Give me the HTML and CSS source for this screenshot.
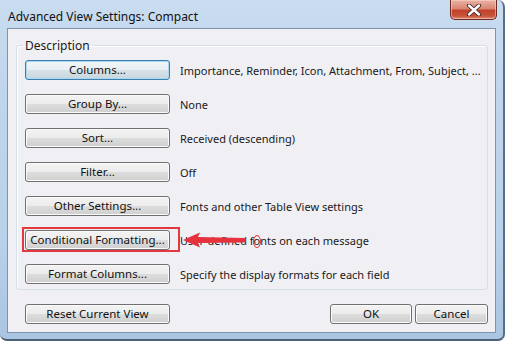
FILE: index.html
```html
<!DOCTYPE html>
<html>
<head>
<meta charset="utf-8">
<link rel="stylesheet" href="styles.css">
</head>
<body>
<div class="window">
  <div class="titlebar">
    <span class="title">Advanced View Settings: Compact</span>
    <div class="close">
      <svg width="16" height="12" viewBox="0 0 16 12"><path d="M3 1.5 L13 10.5 M13 1.5 L3 10.5" stroke="#4a2020" stroke-width="4.2" stroke-linecap="round"/><path d="M3 1.5 L13 10.5 M13 1.5 L3 10.5" stroke="#ffffff" stroke-width="2.4" stroke-linecap="round"/></svg>
    </div>
  </div>
  <div class="client">
    <fieldset class="group">
      <legend>Description</legend>
      <div class="row"><button class="btn default">Columns...</button><span class="desc">Importance, Reminder, Icon, Attachment, From, Subject, ...</span></div>
      <div class="row"><button class="btn">Group By...</button><span class="desc">None</span></div>
      <div class="row"><button class="btn">Sort...</button><span class="desc">Received (descending)</span></div>
      <div class="row"><button class="btn">Filter...</button><span class="desc">Off</span></div>
      <div class="row"><button class="btn">Other Settings...</button><span class="desc">Fonts and other Table View settings</span></div>
      <div class="row mark"><button class="btn">Conditional Formatting...</button><span class="desc">User-defined f<span class="circled">o</span>nts on each message</span>
        <span class="redbox"></span>
        <svg class="arrow" width="64" height="16" viewBox="0 0 64 16"><path d="M0 8 L17 0.5 L15 5 L62 6 L63 8 L62 10.5 L15 11 L17 15.5 Z" fill="#e5323c"/></svg>
      </div>
      <div class="row"><button class="btn">Format Columns...</button><span class="desc">Specify the display formats for each field</span></div>
    </fieldset>
    <div class="footer">
      <button class="btn">Reset Current View</button>
      <div class="spacer"></div>
      <button class="btn small">OK</button>
      <button class="btn cancel">Cancel</button>
    </div>
  </div>
</div>
</body>
</html>
```
FILE: styles.css
```css
html, body { margin: 0; padding: 0; }
body {
  width: 505px; height: 341px; overflow: hidden;
  font-family: "Noto Sans", "Open Sans", sans-serif;
  font-size: 11px; color: #1a1a1a;
}
.window {
  width: 505px; height: 341px; box-sizing: border-box;
  background: linear-gradient(180deg, #c9dcf0 0%, #bfd5ec 30%, #b9d1ea 70%, #a9c5e2 100%);
  border-right: 2px solid #5a6e88;
  border-bottom: 2px solid #4d6078;
  border-radius: 0 7px 7px 7px;
  display: flex; flex-direction: column;
  padding: 0 7px 6px 7px;
}
.titlebar {
  height: 31px; display: flex; align-items: flex-start; position: relative;
}
.title {
  margin-top: 8px; margin-left: 1px; font-size: 12px; color: #111;
}
.close {
  position: absolute; right: -1px; top: 0;
  width: 47px; height: 20px; box-sizing: border-box;
  border: 1px solid #6b2a22; border-top: none;
  border-radius: 0 0 5px 5px;
  background: linear-gradient(180deg, #eab3a4 0%, #d98672 45%, #c0412a 55%, #c8553a 85%, #e0927c 100%);
  box-shadow: inset 0 0 0 1px rgba(255,220,210,0.5);
  display: flex; align-items: center; justify-content: center;
}
.client {
  flex: 1; box-sizing: border-box; min-width: 0;
  background: #f0eff4;
  border: 1px solid #7f93aa;
  padding: 8px 7px 8px 8px;
  display: flex; flex-direction: column;
}
.group {
  margin: 0; padding: 6px 8px 5px 8px; min-width: 0;
  border: 1px solid #d5dfe5; border-radius: 3px;
  box-shadow: inset 1px 1px 0 #fff;
  display: flex; flex-direction: column; gap: 14px;
}
.group legend {
  padding: 0 2px; margin-left: -2px; color: #1a1a1a;
  font-size: 12px;
}
.row { display: flex; align-items: center; gap: 10px; position: relative; }
.btn {
  width: 145px; height: 20px; box-sizing: border-box; flex: none;
  font-family: inherit; font-size: 11.5px; color: #111;
  border: 1px solid #707070; border-radius: 3px;
  background: linear-gradient(180deg, #f3f3f3 0%, #ececec 48%, #dddddd 52%, #cfcfcf 100%);
  box-shadow: inset 0 0 0 1px #fbfbfb;
  padding: 0; line-height: 16px;
}
.btn.default {
  border-color: #3c7fb1;
  box-shadow: inset 0 0 0 1px #a8d8ee;
  background: linear-gradient(180deg, #f2f6f8 0%, #e8eef2 48%, #d8e2e8 52%, #c9d6de 100%);
}
.desc { color: #1a1a1a; white-space: nowrap; font-size: 11px; }
.circled { display: inline-block; position: relative; }
.circled::after {
  content: ""; position: absolute; left: -1px; top: 2px; width: 6px; height: 11px;
  border: 1.5px solid #e5323c; border-radius: 50%;
}
.redbox {
  position: absolute; left: -3px; top: -3px; width: 158px; height: 25px;
  border: 2px solid #e0393f; box-sizing: border-box; pointer-events: none;
}
.arrow { position: absolute; left: 158px; top: 2px; }
.footer {
  display: flex; align-items: center; margin-top: 14px; padding-left: 9px; padding-right: 0;
}
.spacer { flex: 1; }
.btn.small { width: 82px; }
.btn.cancel { width: 73px; margin-left: 3px; }
```
